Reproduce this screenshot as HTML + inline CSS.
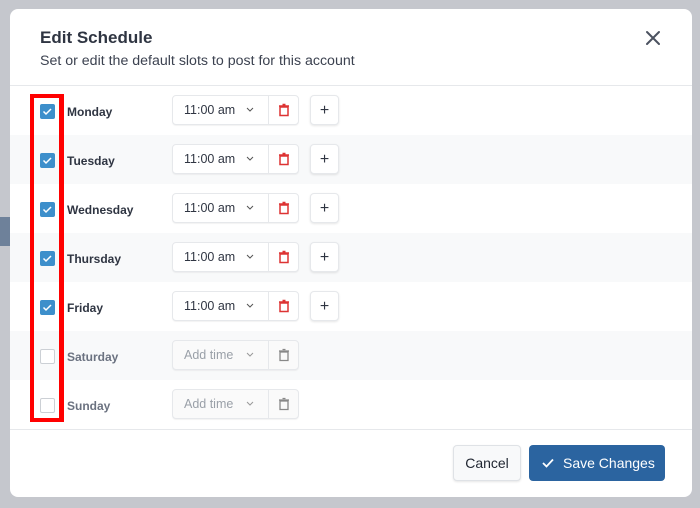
<!DOCTYPE html>
<html><head><style>
*{box-sizing:border-box;margin:0;padding:0}
body{width:700px;height:508px;background:#c5c7cd;font-family:"Liberation Sans",Arial,sans-serif;position:relative;overflow:hidden}
.blk{position:absolute;left:0;top:217px;width:10px;height:29px;background:#6e819a}
.modal{position:absolute;left:10px;top:9px;width:682px;height:488px;background:#fff;border-radius:8px;overflow:hidden}
h1{position:absolute;left:30px;top:19px;font-size:17px;font-weight:bold;color:#2f3542}
.sub{position:absolute;left:30px;top:44px;font-size:14.2px;color:#3c4250}
.x{position:absolute;left:634px;top:20px}
.hd{position:absolute;left:0;top:76px;width:100%;height:1px;background:#e6e8eb}
.row{position:absolute;left:0;width:100%;height:49px;background:#fff}
.row.g{background:#f8f9fa}
.cb{position:absolute;left:30px;top:18px;width:15px;height:15px;border-radius:2px;background:#3d8fcb}
.cb.off{background:#fff;border:1px solid #ccd0d5}
.day{position:absolute;left:57px;top:19px;font-size:12px;font-weight:bold;color:#2f3542}
.day.off{color:#6b7280}
.grp{position:absolute;left:162px;top:9px;width:127px;height:30px;border:1px solid #e6e8eb;border-radius:4px;background:#fff;box-shadow:0 1px 1px rgba(0,0,0,.05)}
.grp.off{background:#fafafa}
.grp .t{position:absolute;left:11px;top:7px;font-size:12.5px;color:#2f3542}
.grp.off .t{color:#9aa0a8}
.grp .c{position:absolute;left:72px;top:10px}
.grp .d{position:absolute;left:95px;top:0;width:1px;height:28px;background:#e6e8eb}
.grp .tr{position:absolute;left:105px;top:7px}
.plus{position:absolute;left:300px;top:9px;width:29px;height:30px;border:1px solid #e6e8eb;border-radius:4px;background:#fff;box-shadow:0 1px 2px rgba(0,0,0,.1);font-size:16px;text-align:center;line-height:29px;color:#2f3542}
.red{position:absolute;left:20px;top:85px;width:34px;height:328px;border:4px solid #ff0000;border-width:4px 5px 4px 4px}
.fd{position:absolute;left:0;top:420px;width:100%;height:1px;background:#e6e8eb}
.cancel{position:absolute;left:443px;top:436px;width:68px;height:36px;border:1px solid #dfe2e6;border-radius:4px;background:#f8f9fa;font-size:14px;color:#1f2530;text-align:center;line-height:34px;box-shadow:0 1px 2px rgba(0,0,0,.1)}
.save{position:absolute;left:519px;top:436px;width:136px;height:36px;border-radius:4px;background:#2b64a0;color:#fff;font-size:14px;line-height:36px;padding-left:34px}
.save svg{position:absolute;left:13px;top:13px}
</style></head><body>
<div class="blk"></div>
<div class="modal">
<h1>Edit Schedule</h1>
<div class="sub">Set or edit the default slots to post for this account</div>
<svg class="x" width="18" height="18" viewBox="0 0 18 18"><path d="M3 3L15 15M15 3L3 15" stroke="#4b5260" stroke-width="2" stroke-linecap="round"/></svg>
<div class="hd"></div>

<div class="row" style="top:77px"><div class="cb"><svg width="15" height="15"><path d="M3.5 7.5l2.5 2.5 5-5" stroke="#fff" stroke-width="1.5" fill="none"/></svg></div><div class="day">Monday</div>
<div class="grp"><span class="t">11:00 am</span><svg class="c" width="10" height="8"><path d="M2 2l3 3 3-3" stroke="#555" fill="none"/></svg><div class="d"></div><svg class="tr" width="12" height="14" viewBox="0 0 12 14"><path d="M2 4h8v8.5H2zM1 3h10M4.5 1.5h3" stroke="#d33" stroke-width="1.5" fill="none"/></svg></div><div class="plus">+</div></div>

<div class="row g" style="top:126px"><div class="cb"><svg width="15" height="15"><path d="M3.5 7.5l2.5 2.5 5-5" stroke="#fff" stroke-width="1.5" fill="none"/></svg></div><div class="day">Tuesday</div>
<div class="grp"><span class="t">11:00 am</span><svg class="c" width="10" height="8"><path d="M2 2l3 3 3-3" stroke="#555" fill="none"/></svg><div class="d"></div><svg class="tr" width="12" height="14" viewBox="0 0 12 14"><path d="M2 4h8v8.5H2zM1 3h10M4.5 1.5h3" stroke="#d33" stroke-width="1.5" fill="none"/></svg></div><div class="plus">+</div></div>

<div class="row" style="top:175px"><div class="cb"><svg width="15" height="15"><path d="M3.5 7.5l2.5 2.5 5-5" stroke="#fff" stroke-width="1.5" fill="none"/></svg></div><div class="day">Wednesday</div>
<div class="grp"><span class="t">11:00 am</span><svg class="c" width="10" height="8"><path d="M2 2l3 3 3-3" stroke="#555" fill="none"/></svg><div class="d"></div><svg class="tr" width="12" height="14" viewBox="0 0 12 14"><path d="M2 4h8v8.5H2zM1 3h10M4.5 1.5h3" stroke="#d33" stroke-width="1.5" fill="none"/></svg></div><div class="plus">+</div></div>

<div class="row g" style="top:224px"><div class="cb"><svg width="15" height="15"><path d="M3.5 7.5l2.5 2.5 5-5" stroke="#fff" stroke-width="1.5" fill="none"/></svg></div><div class="day">Thursday</div>
<div class="grp"><span class="t">11:00 am</span><svg class="c" width="10" height="8"><path d="M2 2l3 3 3-3" stroke="#555" fill="none"/></svg><div class="d"></div><svg class="tr" width="12" height="14" viewBox="0 0 12 14"><path d="M2 4h8v8.5H2zM1 3h10M4.5 1.5h3" stroke="#d33" stroke-width="1.5" fill="none"/></svg></div><div class="plus">+</div></div>

<div class="row" style="top:273px"><div class="cb"><svg width="15" height="15"><path d="M3.5 7.5l2.5 2.5 5-5" stroke="#fff" stroke-width="1.5" fill="none"/></svg></div><div class="day">Friday</div>
<div class="grp"><span class="t">11:00 am</span><svg class="c" width="10" height="8"><path d="M2 2l3 3 3-3" stroke="#555" fill="none"/></svg><div class="d"></div><svg class="tr" width="12" height="14" viewBox="0 0 12 14"><path d="M2 4h8v8.5H2zM1 3h10M4.5 1.5h3" stroke="#d33" stroke-width="1.5" fill="none"/></svg></div><div class="plus">+</div></div>

<div class="row g" style="top:322px"><div class="cb off"></div><div class="day off">Saturday</div>
<div class="grp off"><span class="t">Add time</span><svg class="c" width="10" height="8"><path d="M2 2l3 3 3-3" stroke="#999" fill="none"/></svg><div class="d"></div><svg class="tr" width="12" height="14" viewBox="0 0 12 14"><path d="M2 4h8v8.5H2zM1 3h10M4.5 1.5h3" stroke="#888" stroke-width="1.3" fill="none"/></svg></div></div>

<div class="row" style="top:371px"><div class="cb off"></div><div class="day off">Sunday</div>
<div class="grp off"><span class="t">Add time</span><svg class="c" width="10" height="8"><path d="M2 2l3 3 3-3" stroke="#999" fill="none"/></svg><div class="d"></div><svg class="tr" width="12" height="14" viewBox="0 0 12 14"><path d="M2 4h8v8.5H2zM1 3h10M4.5 1.5h3" stroke="#888" stroke-width="1.3" fill="none"/></svg></div></div>

<div class="red"></div>
<div class="fd"></div>
<div class="cancel">Cancel</div>
<div class="save"><svg width="12" height="10" viewBox="0 0 12 10"><path d="M1 5l3.5 3.5L11 1.5" stroke="#fff" stroke-width="1.8" fill="none"/></svg>Save Changes</div>
</div>
</body></html>
